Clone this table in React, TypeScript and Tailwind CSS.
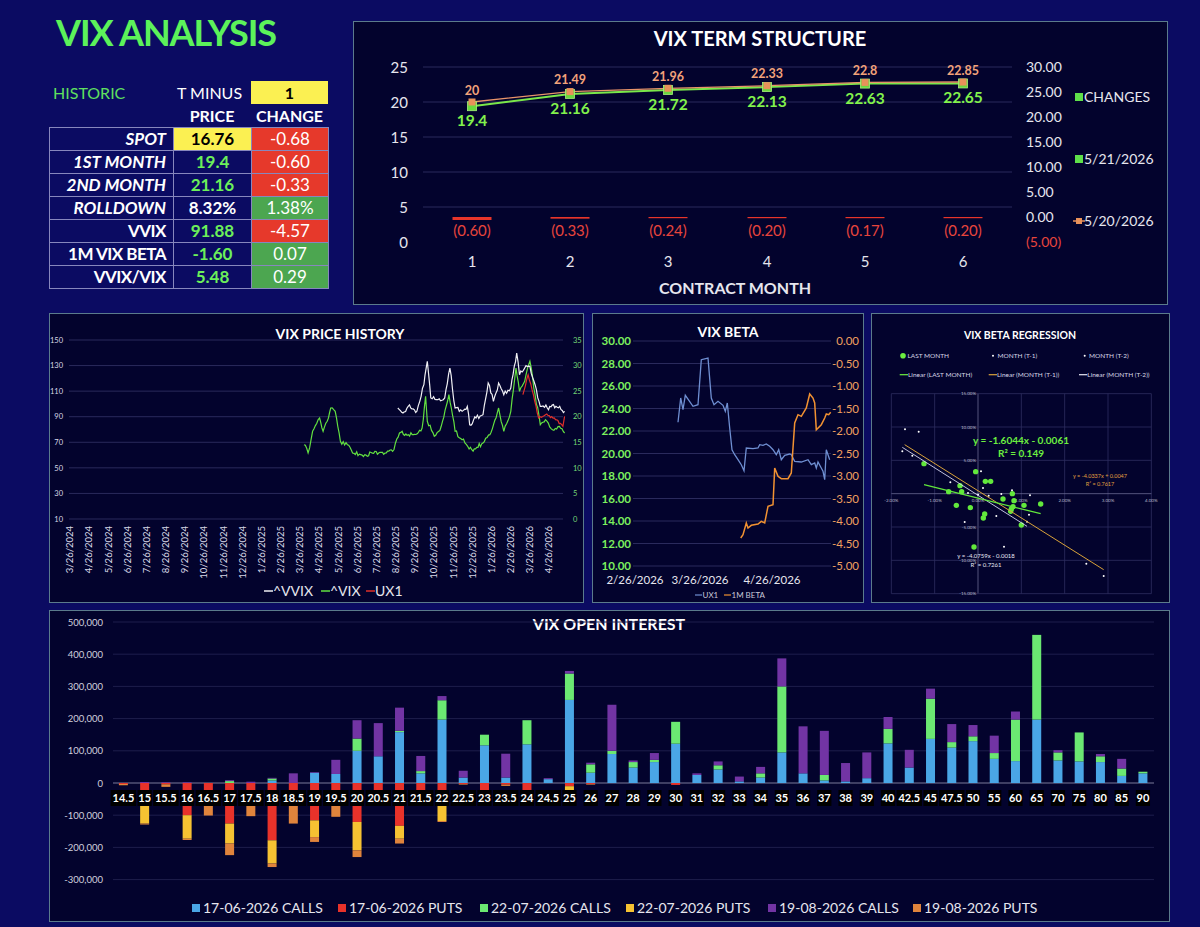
import React from "react";

type P = [number, number];

function mulberry32(a: number) {
  return function () {
    a |= 0;
    a = (a + 0x6d2b79f5) | 0;
    let t = Math.imul(a ^ (a >>> 15), 1 | a);
    t = (t + Math.imul(t ^ (t >>> 7), 61 | t)) ^ t;
    return ((t ^ (t >>> 14)) >>> 0) / 4294967296;
  };
}

function noisy(pts: P[], seed: number, step: number, amp: number): P[] {
  const r = mulberry32(seed);
  const out: P[] = [];
  for (let i = 0; i < pts.length - 1; i++) {
    const [ax, ay] = pts[i];
    const [bx, by] = pts[i + 1];
    const n = Math.max(1, Math.round((bx - ax) / step));
    for (let k = 0; k < n; k++) {
      const t = k / n;
      out.push([ax + (bx - ax) * t, ay + (by - ay) * t + (k === 0 ? 0 : (r() - 0.5) * 2 * amp)]);
    }
  }
  out.push(pts[pts.length - 1]);
  return out;
}

const ps = (p: P[]) => p.map(([x, y]) => `${x.toFixed(1)},${y.toFixed(1)}`).join(" ");

function Panel({ x, y, w, h, cls, children }: { x: number; y: number; w: number; h: number; cls: string; children: React.ReactNode }) {
  return (
    <div className={`shrink-0 border border-[#5b7b8c] bg-[#03032d] ${cls}`}>
      <svg width={w - 2} height={h - 2} viewBox={`${x + 1} ${y + 1} ${w - 2} ${h - 2}`} className="block">
        {children}
      </svg>
    </div>
  );
}

/* ---------------- TERM STRUCTURE ---------------- */
function TermStructure() {
  const xs = [472, 570, 668, 767, 865, 963];
  const g = [19.4, 21.16, 21.72, 22.13, 22.63, 22.65];
  const o = [20, 21.49, 21.96, 22.33, 22.8, 22.85];
  const chg = [-0.6, -0.33, -0.24, -0.2, -0.17, -0.2];
  const chgL = ["(0.60)", "(0.33)", "(0.24)", "(0.20)", "(0.17)", "(0.20)"];
  const ly = (v: number) => 242 - v * 7;
  const leftL = [25, 20, 15, 10, 5, 0];
  const rightL = ["30.00", "25.00", "20.00", "15.00", "10.00", "5.00", "0.00", "(5.00)"];
  return (
    <Panel x={353} y={21} w={815} h={284} cls="w-[815px] h-[284px]">
      <text x={760} y={45.5} textAnchor="middle" fontSize={20} fontWeight={700} fill="#ffffff">VIX TERM STRUCTURE</text>
      {[67, 102, 137, 172, 207].map((y) => (
        <line key={y} x1={423} x2={1012} y1={y} y2={y} stroke="#2a2a5c" strokeWidth={1} />
      ))}
      {leftL.map((v, i) => (
        <text key={v} x={408} y={67 + i * 35 + 5.5} textAnchor="end" fontSize={15} fill="#e6e6ee">{v}</text>
      ))}
      {rightL.map((v, i) => (
        <text key={v} x={1026} y={67 + i * 25 + 5} fontSize={14} fill={v === "(5.00)" ? "#e8453c" : "#e6e6ee"}>{v}</text>
      ))}
      {xs.map((x, i) => (
        <g key={x}>
          <rect x={x - 19.5} y={217} width={39} height={Math.max(1.2, -chg[i] * 5)} fill="#e8352a" />
          <text x={x} y={235.5} textAnchor="middle" fontSize={15} fill="#e8453c">{chgL[i]}</text>
          <text x={x} y={266.5} textAnchor="middle" fontSize={15} fill="#e6e6ee">{i + 1}</text>
        </g>
      ))}
      <polyline points={ps(xs.map((x, i) => [x, ly(g[i])] as P))} fill="none" stroke="#7be84a" strokeWidth={2} />
      <polyline points={ps(xs.map((x, i) => [x, ly(o[i])] as P))} fill="none" stroke="#e8946a" strokeWidth={1.3} />
      {xs.map((x, i) => (
        <rect key={"g" + x} x={x - 4.5} y={ly(g[i]) - 4.5} width={9} height={9} fill="#69d83e" stroke="#a6f27a" strokeWidth={0.8} />
      ))}
      {xs.map((x, i) => (
        <rect key={"o" + x} x={x - 3.5} y={ly(o[i]) - 3.5} width={7} height={7} fill="#e8915a" />
      ))}
      {xs.map((x, i) => (
        <g key={"l" + x}>
          <text x={x} y={ly(o[i]) - 12 + 4.5} textAnchor="middle" fontSize={12.5} fontWeight={700} fill="#f2a27a">{o[i]}</text>
          <text x={x} y={ly(g[i]) + 14.5 + 5.5} textAnchor="middle" fontSize={15.5} fontWeight={700} fill="#82f24c">{g[i]}</text>
        </g>
      ))}
      <text x={735} y={293.5} textAnchor="middle" fontSize={16} fontWeight={700} fill="#e6e6ee">CONTRACT MONTH</text>
      <rect x={1075} y={93} width={8} height={8} fill="#5fe04a" />
      <text x={1084} y={102} fontSize={14} fill="#e6e6ee">CHANGES</text>
      <rect x={1075} y={155} width={8} height={8} fill="#5fe04a" />
      <text x={1084} y={164} fontSize={14} fill="#e6e6ee">5/21/2026</text>
      <line x1={1073} x2={1085} y1={221} y2={221} stroke="#e8915a" strokeWidth={1.5} />
      <rect x={1076} y={218} width={6} height={6} fill="#e8915a" />
      <text x={1084} y={226} fontSize={14} fill="#e6e6ee">5/20/2026</text>
    </Panel>
  );
}

/* ---------------- PRICE HISTORY ---------------- */
const SX = 2.877;
const toPH = (a: P[]): P[] => a.map(([zx, zy]) => [45 + zx / SX, 308 + zy / 3]);
const vixZ: P[] = [[745,410],[757,435],[770,370],[790,330],[800,370],[812,340],[822,300],[835,310],[850,400],[870,410],[885,435],[920,440],[960,435],[1000,430],[1020,375],[1060,380],[1085,360],[1095,265],[1100,340],[1120,385],[1140,355],[1162,260],[1180,370],[1200,395],[1228,425],[1260,405],[1280,380],[1305,300],[1320,370],[1340,310],[1355,180],[1365,250],[1380,220],[1395,160],[1410,260],[1425,350],[1440,335],[1460,365],[1480,355],[1495,375]];
const vvixZ: P[] = [[1015,300],[1030,315],[1045,295],[1070,310],[1090,230],[1100,160],[1110,270],[1130,275],[1150,270],[1165,180],[1180,300],[1200,310],[1215,295],[1222,350],[1240,330],[1260,320],[1275,225],[1290,280],[1305,225],[1320,260],[1340,240],[1357,135],[1365,200],[1380,180],[1395,175],[1410,230],[1425,295],[1445,300],[1470,295],[1495,310]];
const ux1Z: P[] = [[1375,260],[1390,200],[1405,260],[1420,330],[1440,320],[1465,330],[1490,355],[1495,325]];

function PriceHistory() {
  const left = [150, 130, 110, 90, 70, 50, 30, 10];
  const right = [35, 30, 25, 20, 15, 10, 5, 0];
  const ys = left.map((_, i) => 340 + i * 25.57);
  const dates: string[] = [];
  for (let i = 0; i < 26; i++) {
    const m = ((2 + i) % 12) + 1;
    const y = 2024 + Math.floor((2 + i) / 12);
    dates.push(`${m}/26/${y}`);
  }
  const vix = noisy(toPH(vixZ), 7, 1.3, 2.2);
  const vvix = noisy(toPH(vvixZ), 11, 1.3, 2.6);
  const ux1 = noisy(toPH(ux1Z), 5, 1.3, 1.2);
  return (
    <Panel x={49} y={313} w={535} h={290} cls="w-[535px] h-[290px]">
      <text x={340} y={339} textAnchor="middle" fontSize={14} fontWeight={700} fill="#ffffff">VIX PRICE HISTORY</text>
      {ys.map((y, i) => (
        <g key={i}>
          <line x1={69} x2={563} y1={y} y2={y} stroke="#2a2a5c" strokeWidth={1} />
          <text x={63} y={y + 2.7} textAnchor="end" fontSize={7.5} fill="#d8d8e6">{left[i]}</text>
          <text x={573} y={y + 2.7} fontSize={7.5} fill="#76d876">{right[i]}</text>
        </g>
      ))}
      {dates.map((d, i) => {
        const x = 70 + i * 19.16;
        return (
          <text key={d} x={x} y={526} dy="0.35em" transform={`rotate(-90 ${x} 526)`} textAnchor="end" fontSize={9.5} fill="#d8d8e6">{d}</text>
        );
      })}
      <polyline points={ps(vix)} fill="none" stroke="#62e040" strokeWidth={1.2} />
      <polyline points={ps(vvix)} fill="none" stroke="#f0f0f4" strokeWidth={1.2} />
      <polyline points={ps(ux1)} fill="none" stroke="#e0302a" strokeWidth={1.2} />
      <line x1={264} x2={273} y1={591} y2={591} stroke="#f0f0f4" strokeWidth={1.5} />
      <text x={273} y={596} fontSize={14} fill="#e6e6ee">^VVIX</text>
      <line x1={321} x2={330} y1={591} y2={591} stroke="#62e040" strokeWidth={1.5} />
      <text x={330} y={596} fontSize={14} fill="#e6e6ee">^VIX</text>
      <line x1={366} x2={375} y1={591} y2={591} stroke="#e0302a" strokeWidth={1.5} />
      <text x={375} y={596} fontSize={14} fill="#e6e6ee">UX1</text>
    </Panel>
  );
}

/* ---------------- VIX BETA ---------------- */
const toB = (a: P[]): P[] => a.map(([zx, zy]) => [588 + zx / 3, 308 + zy / 3]);
const ux1B: P[] = [[270,343],[278,270],[285,305],[292,262],[315,295],[330,290],[340,155],[360,150],[370,270],[378,290],[390,280],[405,292],[412,310],[418,285],[425,360],[432,425],[440,440],[450,455],[460,470],[468,488],[475,420],[495,422],[510,420],[515,410],[525,412],[535,408],[545,415],[555,425],[565,440],[572,425],[580,455],[590,442],[605,438],[610,440],[620,460],[640,462],[660,455],[670,470],[680,465],[685,480],[690,462],[705,490],[710,515],[715,425],[725,455]];
const betaB: P[] = [[458,690],[465,680],[475,645],[480,660],[490,652],[510,648],[520,640],[530,645],[540,595],[555,590],[560,480],[570,505],[580,512],[600,512],[610,495],[620,345],[630,320],[640,325],[655,300],[665,258],[675,270],[680,285],[685,365],[700,350],[710,330],[715,318],[722,320],[728,313]];

function VixBeta() {
  const left = ["30.00", "28.00", "26.00", "24.00", "22.00", "20.00", "18.00", "16.00", "14.00", "12.00", "10.00"];
  const right = ["0.00", "-0.50", "-1.00", "-1.50", "-2.00", "-2.50", "-3.00", "-3.50", "-4.00", "-4.50", "-5.00"];
  return (
    <Panel x={592} y={313} w={272} h={290} cls="w-[272px] h-[290px]">
      <text x={728} y={337} textAnchor="middle" fontSize={14} fontWeight={700} fill="#ffffff">VIX BETA</text>
      {left.map((l, i) => {
        const y = 341 + i * 22.5;
        return (
          <g key={l}>
            <line x1={633} x2={831} y1={y} y2={y} stroke="#2a2a5c" strokeWidth={1} />
            <text x={631} y={y + 4} textAnchor="end" fontSize={11.5} fontWeight={700} fill="#7cf05e">{l}</text>
            <text x={859} y={y + 4} textAnchor="end" fontSize={11.5} fill="#f0a060">{right[i]}</text>
          </g>
        );
      })}
      {[["2/26/2026", 635], ["3/26/2026", 700], ["4/26/2026", 772]].map(([t, x]) => (
        <text key={t as string} x={x as number} y={584} textAnchor="middle" fontSize={11.5} fill="#e6e6ee">{t}</text>
      ))}
      <polyline points={ps(toB(ux1B))} fill="none" stroke="#6f8fd2" strokeWidth={1.3} />
      <polyline points={ps(toB(betaB))} fill="none" stroke="#f29232" strokeWidth={1.5} />
      <line x1={695} x2={702} y1={595} y2={595} stroke="#6f8fd2" strokeWidth={1.2} />
      <text x={702.5} y={598} fontSize={8} fill="#c8c8d8">UX1</text>
      <line x1={724} x2={731} y1={595} y2={595} stroke="#f29232" strokeWidth={1.2} />
      <text x={731.5} y={598} fontSize={8} fill="#c8c8d8">1M BETA</text>
    </Panel>
  );
}

/* ---------------- REGRESSION ---------------- */
const toR = (a: P[]): P[] => a.map(([zx, zy]) => [868 + zx / 3, 308 + zy / 3]);
const greenDots: P[] = [[168,467],[242,551],[276,533],[281,551],[265,592],[307,599],[323,491],[352,520],[368,520],[346,630],[350,618],[318,717],[405,573],[433,557],[438,578],[430,603],[428,610],[468,592],[460,651],[518,588],[435,596]];
const whiteDots: P[] = [[111,364],[152,371],[103,430],[133,443],[247,523],[290,642],[300,555],[339,490],[345,540],[362,563],[385,624],[400,558],[408,716],[432,547],[486,562],[483,620],[477,641],[655,767],[707,804],[280,535],[330,560]];

function Regression() {
  const vx = [0, 1, 2, 3, 4, 5, 6].map((k) => 868 + (70 + 130 * k) / 3);
  const hy = [0, 1, 2, 3, 4, 5, 6].map((k) => 308 + (257 + 100 * k) / 3);
  const ylab = ["15.00%", "10.00%", "5.00%", "", "-5.00%", "-10.00%", "-15.00%"];
  const xlab = ["-2.00%", "-1.00%", "0.00%", "1.00%", "2.00%", "3.00%", "4.00%"];
  const [g1, g2] = toR([[168, 530], [518, 617]]);
  const [o1, o2] = toR([[110, 410], [707, 785]]);
  const [w1, w2] = toR([[103, 418], [477, 655]]);
  return (
    <Panel x={871} y={313} w={299} h={290} cls="w-[299px] h-[290px]">
      <text x={1020} y={339} textAnchor="middle" fontSize={10.5} fontWeight={700} fill="#ffffff">VIX BETA REGRESSION</text>
      <circle cx={903} cy={355.7} r={2.8} fill="#6cf040" />
      <text x={907.5} y={358} fontSize={6.5} fill="#d8d8e6">LAST MONTH</text>
      <circle cx={993} cy={355.7} r={1} fill="#ffffff" />
      <text x={997.5} y={358} fontSize={6.5} fill="#d8d8e6">MONTH (T-1)</text>
      <circle cx={1084.7} cy={355.7} r={1} fill="#ffffff" />
      <text x={1089} y={358} fontSize={6.5} fill="#d8d8e6">MONTH (T-2)</text>
      <line x1={899.7} x2={908} y1={374.7} y2={374.7} stroke="#6cf040" strokeWidth={1.2} />
      <text x={908} y={377} fontSize={6.5} fill="#d8d8e6">Linear (LAST MONTH)</text>
      <line x1={988.7} x2={997} y1={374.7} y2={374.7} stroke="#d9a23a" strokeWidth={1.2} />
      <text x={997} y={377} fontSize={6.5} fill="#d8d8e6">Linear (MONTH (T-1))</text>
      <line x1={1079} x2={1087.3} y1={374.7} y2={374.7} stroke="#e8e8f4" strokeWidth={1.2} />
      <text x={1087.3} y={377} fontSize={6.5} fill="#d8d8e6">Linear (MONTH (T-2))</text>
      {vx.map((x) => (
        <line key={"v" + x} x1={x} x2={x} y1={hy[0]} y2={hy[6]} stroke={x === vx[2] ? "#6a6a90" : "#2e2e60"} strokeWidth={0.8} />
      ))}
      {hy.map((y) => (
        <line key={"h" + y} x1={vx[0]} x2={vx[6]} y1={y} y2={y} stroke={y === hy[3] ? "#6a6a90" : "#2e2e60"} strokeWidth={0.8} />
      ))}
      {hy.map((y, i) => (
        <text key={"yl" + i} x={976} y={y + 1.5} textAnchor="end" fontSize={4.5} fill="#b8b8c8">{ylab[i]}</text>
      ))}
      {vx.map((x, i) => (
        <text key={"xl" + i} x={x} y={502} textAnchor="middle" fontSize={4.5} fill="#b8b8c8">{xlab[i]}</text>
      ))}
      {toR(whiteDots).map(([x, y], i) => (
        <circle key={"w" + i} cx={x} cy={y} r={1} fill="#ffffff" />
      ))}
      {toR(greenDots).map(([x, y], i) => (
        <circle key={"g" + i} cx={x} cy={y} r={2.7} fill="#62e83c" />
      ))}
      <line x1={o1[0]} y1={o1[1]} x2={o2[0]} y2={o2[1]} stroke="#d9a23a" strokeWidth={1} />
      <line x1={w1[0]} y1={w1[1]} x2={w2[0]} y2={w2[1]} stroke="#d6d6f0" strokeWidth={0.9} />
      <line x1={g1[0]} y1={g1[1]} x2={g2[0]} y2={g2[1]} stroke="#62e83c" strokeWidth={1.2} />
      <text x={1021} y={443.5} textAnchor="middle" fontSize={10} fontWeight={700} fill="#6cf040">y = -1.6044x - 0.0061</text>
      <text x={1021} y={456.5} textAnchor="middle" fontSize={10} fontWeight={700} fill="#6cf040">R² = 0.149</text>
      <text x={1100} y={478} textAnchor="middle" fontSize={5.5} fill="#e0a040">y = -4.0337x + 0.0047</text>
      <text x={1100} y={486} textAnchor="middle" fontSize={5.5} fill="#e0a040">R² = 0.7617</text>
      <text x={986} y={557.5} textAnchor="middle" fontSize={6} fill="#e8e8f4">y = -4.0759x - 0.0018</text>
      <text x={986} y={567} textAnchor="middle" fontSize={6} fill="#e8e8f4">R² = 0.7261</text>
    </Panel>
  );
}

/* ---------------- OPEN INTEREST ---------------- */
const cats = ["14.5","15","15.5","16","16.5","17","17.5","18","18.5","19","19.5","20","20.5","21","21.5","22","22.5","23","23.5","24","24.5","25","26","27","28","29","30","31","32","33","34","35","36","37","38","39","40","42.5","45","47.5","50","55","60","65","70","75","80","85","90"];
const pos: number[][] = [
  [0,0,0],[0,0,3],[0,0,2],[0,0,2],[0,0,0],[0,6,3],[0,0,4],[8,6,2],[0,0,30],[32,0,2],[28,0,44],[100,38,57],[83,0,103],[158,4,72],[30,7,47],[197,60,13],[17,0,21],[117,33,0],[17,0,74],[120,75,0],[12,0,3],[258,82,8],[32,26,5],[90,10,143],
  [48,17,5],[65,7,21],[122,68,0],[25,0,5],[42,13,12],[5,0,15],[17,13,20],[95,205,87],[30,0,146],[8,17,137],[5,0,57],[15,0,80],[123,45,37],[48,0,55],[137,125,31],[110,17,56],[130,15,35],[75,18,54],[68,129,25],[197,263,0],[70,25,7],[67,90,0],[65,18,7],[22,23,30],[30,5,0],
];
const neg: number[][] = [
  [3,0,4],[68,58,3],[4,0,8],[100,73,4],[68,0,33],[126,62,36],[68,0,35],[178,72,11],[68,0,58],[116,52,15],[68,0,37],[121,88,21],[25,0,0],[133,40,15],[25,0,0],[68,50,3],[3,0,2],[25,0,0],[5,0,4],[25,0,0],[0,0,0],[10,12,0],[3,0,2],[0,0,0],
  [0,0,0],[0,0,0],[6,0,0],[0,0,0],[0,0,0],[0,0,0],[0,0,0],[0,0,0],[0,0,0],[0,0,0],[0,0,0],[0,0,0],[0,0,0],[0,0,0],[0,0,0],[0,0,0],[0,0,0],[0,0,0],[0,0,0],[0,0,0],[0,0,0],[0,0,0],[0,0,0],[0,0,0],[0,0,0],
];
const posC = ["#4aa6e6", "#6be872", "#7234a4"];
const negC = ["#e8322a", "#f6c232", "#e0843c"];

function OpenInterest() {
  const Z = 783;
  const k = 0.322;
  const levels = [500, 400, 300, 200, 100, 0, -100, -200, -300];
  const fmt = (v: number) => (v === 0 ? "0" : (v < 0 ? "-" : "") + Math.abs(v) + ",000");
  const legend: [string, string, number][] = [
    ["17-06-2026 CALLS", posC[0], 192],
    ["17-06-2026 PUTS", negC[0], 338],
    ["22-07-2026 CALLS", posC[1], 480],
    ["22-07-2026 PUTS", negC[1], 626],
    ["19-08-2026 CALLS", posC[2], 768],
    ["19-08-2026 PUTS", negC[2], 913],
  ];
  return (
    <Panel x={49} y={610} w={1121} h={312} cls="w-[1121px] h-[312px]">
      <text x={609} y={630} textAnchor="middle" fontSize={16} fontWeight={700} fill="#ffffff">VIX OPEN INTEREST</text>
      {levels.map((v) => {
        const y = Z - v * k;
        return (
          <g key={v}>
            <line x1={113} x2={1154} y1={y} y2={y} stroke={v === 0 ? "#7a7a9a" : "#1e1e4c"} strokeWidth={1} />
            <text x={103} y={y + 3.5} textAnchor="end" fontSize={9.5} fill="#d0d0de">{fmt(v)}</text>
          </g>
        );
      })}
      {cats.map((c, i) => {
        const x = 123.4 + i * 21.24 - 4.5;
        let acc = 0;
        const ups = pos[i].map((v, j) => {
          const r = <rect key={"p" + j} x={x} y={Z - (acc + v) * k} width={9} height={v * k} fill={posC[j]} />;
          acc += v;
          return r;
        });
        let acc2 = 0;
        const downs = neg[i].map((v, j) => {
          const r = <rect key={"n" + j} x={x} y={Z + acc2 * k} width={9} height={v * k} fill={negC[j]} />;
          acc2 += v;
          return r;
        });
        return (
          <g key={c}>
            {ups}
            {downs}
          </g>
        );
      })}
      {cats.map((c, i) => {
        const x = 123.4 + i * 21.24;
        const w = c.length * 5.6 + 3;
        return (
          <g key={"l" + c}>
            <rect x={x - w / 2} y={790} width={w} height={16} fill="#000000" />
            <text x={x} y={802} textAnchor="middle" fontSize={11} fontWeight={700} fill="#ffffff">{c}</text>
          </g>
        );
      })}
      {legend.map(([t, col, x]) => (
        <g key={t}>
          <rect x={x} y={904} width={8} height={8} fill={col} />
          <text x={x + 11} y={913} fontSize={14} fill="#e6e6ee">{t}</text>
        </g>
      ))}
    </Panel>
  );
}

/* ---------------- LEFT TABLE ---------------- */
type Row = { l: string; it: boolean; p: string; pc: "y" | "g" | "w"; c: string; cc: "r" | "g" };
const rows: Row[] = [
  { l: "SPOT", it: true, p: "16.76", pc: "y", c: "-0.68", cc: "r" },
  { l: "1ST MONTH", it: true, p: "19.4", pc: "g", c: "-0.60", cc: "r" },
  { l: "2ND MONTH", it: true, p: "21.16", pc: "g", c: "-0.33", cc: "r" },
  { l: "ROLLDOWN", it: true, p: "8.32%", pc: "w", c: "1.38%", cc: "g" },
  { l: "VVIX", it: false, p: "91.88", pc: "g", c: "-4.57", cc: "r" },
  { l: "1M VIX BETA", it: false, p: "-1.60", pc: "g", c: "0.07", cc: "g" },
  { l: "VVIX/VIX", it: false, p: "5.48", pc: "g", c: "0.29", cc: "g" },
];

function LeftBlock() {
  return (
    <div className="w-[280px] shrink-0 flex flex-col pt-[10px]">
      <div className="h-[44px] leading-[44px] text-[36px] font-bold tracking-[-0.03em] text-[#5cf25a] pl-[7px]">VIX ANALYSIS</div>
      <div className="mt-[27px] flex h-[23px] items-center text-[16px]">
        <div className="w-[124px] pl-[4px] text-[#5fe05f]">HISTORIC</div>
        <div className="w-[78px] pl-[4px] text-white">T MINUS</div>
        <div className="w-[77px] h-[23px] bg-[#fbf052] text-black font-bold flex items-center justify-center">1</div>
      </div>
      <div className="flex h-[23px] items-center text-[16px] font-bold text-white">
        <div className="w-[124px]" />
        <div className="w-[78px] text-center">PRICE</div>
        <div className="w-[77px] text-center">CHANGE</div>
      </div>
      <div className="border border-[#8787bd] flex flex-col text-[17px]">
        {rows.map((r, i) => (
          <div key={r.l} className={i === 0 ? "flex h-[22px]" : "flex h-[23px] border-t border-[#8787bd]"}>
            <div className={r.it ? "w-[123px] pr-[7px] text-right font-bold italic text-white leading-[22px]" : "w-[123px] pr-[7px] text-right font-bold tracking-[-0.03em] text-white leading-[22px]"}>{r.l}</div>
            <div
              className={
                r.pc === "y"
                  ? "w-[78px] border-l border-[#8787bd] bg-[#fbf052] text-black font-bold text-center leading-[22px]"
                  : r.pc === "g"
                  ? "w-[78px] border-l border-[#8787bd] text-[#6cf05a] font-bold text-center leading-[22px]"
                  : "w-[78px] border-l border-[#8787bd] text-white font-bold text-center leading-[22px]"
              }
            >
              {r.p}
            </div>
            <div
              className={
                r.cc === "r"
                  ? "w-[77px] border-l border-[#8787bd] bg-[#e6392b] text-white text-center leading-[22px]"
                  : "w-[77px] border-l border-[#8787bd] bg-[#4ca650] text-white text-center leading-[22px]"
              }
            >
              {r.c}
            </div>
          </div>
        ))}
      </div>
    </div>
  );
}

export default function App() {
  return (
    <div className="w-[1200px] h-[927px] overflow-hidden bg-[#0b0b62] pl-[49px] flex flex-col font-['Lato','Open_Sans',sans-serif]">
      <div className="flex h-[305px]">
        <LeftBlock />
        <div className="ml-[24px] mt-[21px]">
          <TermStructure />
        </div>
      </div>
      <div className="flex mt-[8px]">
        <PriceHistory />
        <div className="ml-[8px]">
          <VixBeta />
        </div>
        <div className="ml-[7px]">
          <Regression />
        </div>
      </div>
      <div className="mt-[7px]">
        <OpenInterest />
      </div>
    </div>
  );
}
